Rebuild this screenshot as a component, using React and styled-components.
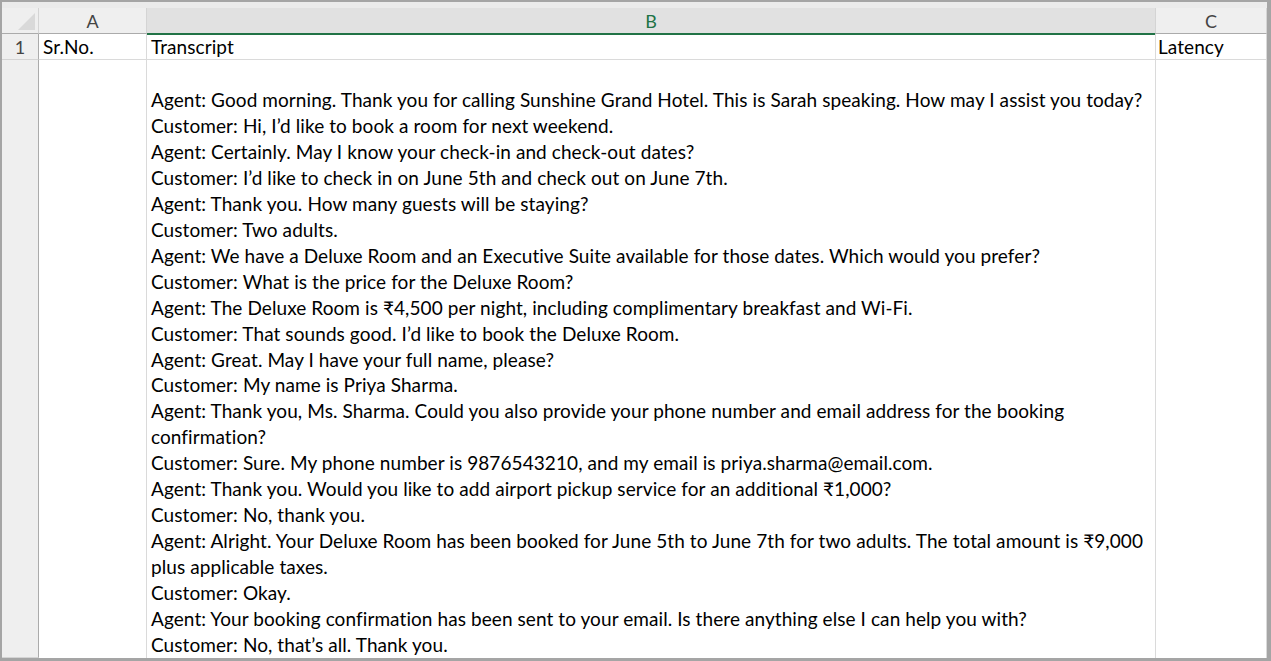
import React from 'react';
import styled, { createGlobalStyle } from 'styled-components';

const GlobalStyle = createGlobalStyle`
  html, body {
    margin: 0;
    padding: 0;
    background: #ffffff;
  }
  body {
    font-family: Lato, "Open Sans", Arial, sans-serif;
  }
`;

const Sheet = styled.div`
  width: 1271px;
  height: 661px;
  box-sizing: border-box;
  border-style: solid;
  border-color: #a5a5a5;
  border-width: 2px 4px 3px 2px;
  background: #ffffff;
  display: flex;
  flex-direction: column;
  overflow: hidden;
`;

const TopStrip = styled.div`
  height: 6px;
  background: #ebebeb;
  flex: none;
`;

const Grid = styled.div`
  display: grid;
  grid-template-columns: 37px 108px 1009px 111px;
  grid-template-rows: 26px 26px 1fr;
  flex: 1;
  min-height: 0;
`;

const Corner = styled.div`
  background: #efefef;
  border-right: 1px solid #d4d4d4;
  border-bottom: 1px solid #ababab;
  display: flex;
  align-items: flex-end;
  justify-content: flex-end;
  padding: 0 3px 3px 0;
`;

const ColHead = styled.div`
  background: ${p => (p.$active ? '#e1e1e1' : '#efefef')};
  color: ${p => (p.$active ? '#217346' : '#444444')};
  border-right: 1px solid #d4d4d4;
  border-bottom: ${p => (p.$active ? '2px solid #217346' : '1px solid #ababab')};
  margin-bottom: ${p => (p.$active ? '-1px' : '0')};
  font-size: 18px;
  display: flex;
  align-items: center;
  justify-content: center;
  padding-top: 1px;
`;

const RowHead = styled.div`
  background: #efefef;
  color: #444444;
  border-right: 1px solid #ababab;
  border-bottom: 1px solid #d4d4d4;
  font-size: 18px;
  display: flex;
  align-items: center;
  justify-content: center;
`;

const Cell = styled.div`
  border-right: 1px solid #dadada;
  border-bottom: 1px solid #dadada;
  color: #000000;
  font-size: 19px;
  letter-spacing: 0.08px;
  padding: 0 0 0 ${p => p.$indent || 4}px;
  display: flex;
  align-items: center;
  white-space: nowrap;
  overflow: hidden;
`;

const BodyCell = styled.div`
  border-right: 1px solid #dadada;
  color: #000000;
  font-size: 19px;
  letter-spacing: 0.08px;
  line-height: 25.95px;
  padding: 27px 0 0 4px;
  overflow: hidden;
`;

const Line = styled.div`
  white-space: nowrap;
`;

const transcript = [
  'Agent: Good morning. Thank you for calling Sunshine Grand Hotel. This is Sarah speaking. How may I assist you today?',
  'Customer: Hi, I\u2019d like to book a room for next weekend.',
  'Agent: Certainly. May I know your check-in and check-out dates?',
  'Customer: I\u2019d like to check in on June 5th and check out on June 7th.',
  'Agent: Thank you. How many guests will be staying?',
  'Customer: Two adults.',
  'Agent: We have a Deluxe Room and an Executive Suite available for those dates. Which would you prefer?',
  'Customer: What is the price for the Deluxe Room?',
  'Agent: The Deluxe Room is \u20b94,500 per night, including complimentary breakfast and Wi-Fi.',
  'Customer: That sounds good. I\u2019d like to book the Deluxe Room.',
  'Agent: Great. May I have your full name, please?',
  'Customer: My name is Priya Sharma.',
  'Agent: Thank you, Ms. Sharma. Could you also provide your phone number and email address for the booking',
  'confirmation?',
  'Customer: Sure. My phone number is 9876543210, and my email is priya.sharma@email.com.',
  'Agent: Thank you. Would you like to add airport pickup service for an additional \u20b91,000?',
  'Customer: No, thank you.',
  'Agent: Alright. Your Deluxe Room has been booked for June 5th to June 7th for two adults. The total amount is \u20b99,000',
  'plus applicable taxes.',
  'Customer: Okay.',
  'Agent: Your booking confirmation has been sent to your email. Is there anything else I can help you with?',
  'Customer: No, that\u2019s all. Thank you.',
];

const SelectAll = () => (
  <svg width="17" height="17" viewBox="0 0 17 17">
    <polygon points="17,0 17,17 0,17" fill="#d9d9d9" />
  </svg>
);

export default function App() {
  return (
    <>
      <GlobalStyle />
      <Sheet>
        <TopStrip />
        <Grid>
          <Corner><SelectAll /></Corner>
          <ColHead>A</ColHead>
          <ColHead $active>B</ColHead>
          <ColHead>C</ColHead>

          <RowHead>1</RowHead>
          <Cell>Sr.No.</Cell>
          <Cell $indent={4}>Transcript</Cell>
          <Cell $indent={2}>Latency</Cell>

          <RowHead />
          <BodyCell />
          <BodyCell>
            {transcript.map((t, i) => (
              <Line key={i}>{t}</Line>
            ))}
          </BodyCell>
          <BodyCell />
        </Grid>
      </Sheet>
    </>
  );
}
